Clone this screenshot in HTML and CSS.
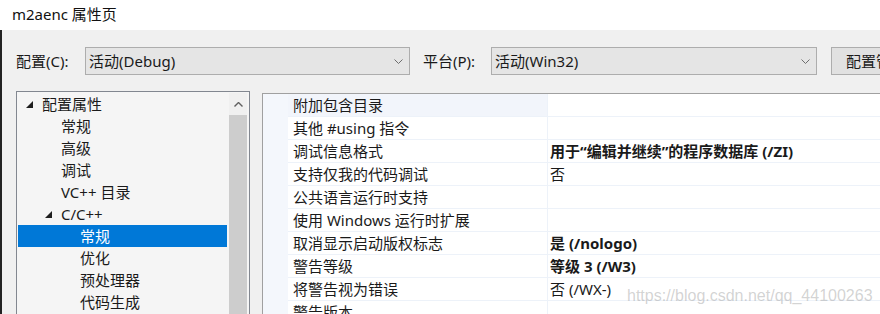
FILE: index.html
```html
<!DOCTYPE html>
<html lang="zh-CN">
<head>
<meta charset="utf-8">
<title>m2aenc 属性页</title>
<link rel="stylesheet" href="styles.css">
</head>
<body>
<div class="title">m2aenc 属性页</div>
<div class="main">
  <div class="toolbar">
    <span class="lbl lbl-config">配置(C):</span>
    <div class="combo combo-config">
      <span class="combo-text">活动(Debug)</span>
      <svg class="chev" width="9" height="5" viewBox="0 0 9 5"><polyline points="0.5,0.5 4.5,4.5 8.5,0.5" fill="none" stroke="#6d6d6d" stroke-width="1"/></svg>
    </div>
    <span class="lbl lbl-plat">平台(P):</span>
    <div class="combo combo-plat">
      <span class="combo-text">活动(Win32)</span>
      <svg class="chev" width="9" height="5" viewBox="0 0 9 5"><polyline points="0.5,0.5 4.5,4.5 8.5,0.5" fill="none" stroke="#6d6d6d" stroke-width="1"/></svg>
    </div>
    <div class="btn">配置管理器(O)...</div>
  </div>
  <div class="content">
    <div class="tree">
      <div class="tree-list">
        <div class="node l0"><span class="tri"></span>配置属性</div>
        <div class="node l1">常规</div>
        <div class="node l1">高级</div>
        <div class="node l1">调试</div>
        <div class="node l1">VC++ 目录</div>
        <div class="node l1"><span class="tri"></span>C/C++</div>
        <div class="node l2 sel">常规</div>
        <div class="node l2">优化</div>
        <div class="node l2">预处理器</div>
        <div class="node l2">代码生成</div>
      </div>
      <div class="vscroll">
        <div class="sb-up"><svg width="9" height="5" viewBox="0 0 9 5"><polyline points="0.5,4.5 4.5,0.5 8.5,4.5" fill="none" stroke="#606060" stroke-width="1.4"/></svg></div>
        <div class="sb-thumb"></div>
      </div>
    </div>
    <div class="grid">
      <div class="margin-col"></div>
      <div class="rows">
        <div class="row first"><div class="k">附加包含目录</div><div class="v"></div></div>
        <div class="row"><div class="k">其他 #using 指令</div><div class="v"></div></div>
        <div class="row"><div class="k">调试信息格式</div><div class="v b">用于“编辑并继续”的程序数据库 (/ZI)</div></div>
        <div class="row"><div class="k">支持仅我的代码调试</div><div class="v">否</div></div>
        <div class="row"><div class="k">公共语言运行时支持</div><div class="v"></div></div>
        <div class="row"><div class="k">使用 Windows 运行时扩展</div><div class="v"></div></div>
        <div class="row"><div class="k">取消显示启动版权标志</div><div class="v b">是 (/nologo)</div></div>
        <div class="row"><div class="k">警告等级</div><div class="v b">等级 3 (/W3)</div></div>
        <div class="row"><div class="k">将警告视为错误</div><div class="v">否 (/WX-)</div></div>
        <div class="row"><div class="k">警告版本</div><div class="v"></div></div>
      </div>
    </div>
  </div>
  <div class="watermark">https://blog.csdn.net/qq_44100263</div>
</div>
</body>
</html>
```
FILE: styles.css
```css
* { box-sizing: border-box; }
html, body {
  margin: 0;
  padding: 0;
}
body {
  width: 880px;
  height: 314px;
  overflow: hidden;
  background: #f0f0f0;
  font-family: "Noto Sans", "Noto Sans CJK SC", sans-serif;
  font-size: 15px;
  color: #1a1a1a;
}
.title {
  height: 30px;
  background: #ffffff;
  padding-left: 12px;
  line-height: 29px;
  font-size: 15px;
  color: #111;
}
.main {
  position: relative;
  height: 284px;
  border-left: 2px solid #222;
  padding-left: 14px;
  overflow: hidden;
}
.toolbar {
  margin-top: 17px;
  height: 28px;
  display: flex;
  align-items: center;
  white-space: nowrap;
}
.toolbar > * { flex-shrink: 0; }
.lbl {
  line-height: 28px;
}
.lbl-config { width: 69px; }
.lbl-plat { width: 68px; margin-left: 13px; }
.combo {
  height: 28px;
  width: 325px;
  border: 1px solid #adadad;
  background: #e5e5e5;
  display: flex;
  align-items: center;
  justify-content: space-between;
  padding-left: 3px;
  padding-right: 6px;
}
.combo-plat { width: 326px; }
.combo-text { line-height: 26px; }
.chev { display: block; }
.btn {
  margin-left: 14px;
  height: 28px;
  width: 130px;
  border: 1px solid #adadad;
  background: #e1e1e1;
  padding-left: 14px;
  line-height: 26px;
}
.content {
  display: flex;
  align-items: flex-start;
  gap: 12px;
  margin-top: 16px;
}
.tree {
  width: 234px;
  height: 260px;
  flex-shrink: 0;
  border: 1px solid #828790;
  background: #f5f5f5;
  padding: 1px;
  display: flex;
}
.tree-list {
  width: 209px;
}
.node {
  height: 22px;
  line-height: 22px;
  white-space: nowrap;
  position: relative;
  color: #1a1a1a;
}
.node.l0 { padding-left: 24px; }
.node.l1 { padding-left: 43px; }
.node.l2 { padding-left: 62px; }
.node.sel {
  background: #0078d7;
  color: #ffffff;
}
.tri {
  position: absolute;
  top: 8px;
  width: 0;
  height: 0;
  border-left: 7px solid transparent;
  border-bottom: 7px solid #1e1e1e;
}
.l0 .tri { left: 8px; }
.l1 .tri { left: 27px; }
.vscroll {
  margin-left: 2px;
  width: 18px;
  background: #f0f0f0;
  display: flex;
  flex-direction: column;
}
.sb-up {
  height: 22px;
  display: flex;
  align-items: center;
  justify-content: center;
}
.sb-up svg { display: block; }
.sb-thumb {
  flex: 1;
  background: #cdcdcd;
}
.grid {
  margin-top: 2px;
  flex: 1;
  height: 260px;
  border-left: 1px solid #a0a0a0;
  border-top: 1px solid #a0a0a0;
  background: #f4f7fc;
  display: flex;
}
.margin-col {
  width: 25px;
  flex-shrink: 0;
}
.rows {
  flex: 1;
  background: #ffffff;
}
.row {
  display: flex;
  height: 23px;
  border-bottom: 1px solid #edf2f9;
}
.k {
  width: 260px;
  flex-shrink: 0;
  padding-left: 5px;
  line-height: 22px;
  white-space: nowrap;
  border-right: 1px solid #edf2f9;
}
.row.first .k { background: #f2f5fb; }
.v {
  flex: 1;
  padding-left: 2px;
  line-height: 22px;
  white-space: nowrap;
}
.v.b { font-weight: 700; }
.watermark {
  position: absolute;
  left: 625px;
  top: 257px;
  font-family: "Liberation Sans", sans-serif;
  font-size: 16px;
  color: rgba(150, 150, 150, 0.42);
  white-space: nowrap;
}
```
